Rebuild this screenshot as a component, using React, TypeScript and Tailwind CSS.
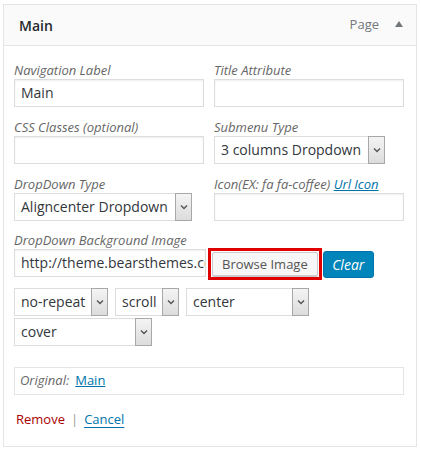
import type { ReactNode } from 'react';

const font = { fontFamily: '"Open Sans", "Liberation Sans", sans-serif' };

function Label({ children }: { children: ReactNode }) {
  return <div className="h-[18px] text-[13px] leading-[18px] italic text-[#666] whitespace-nowrap">{children}</div>;
}

function TextBox({ value = '', className = '' }: { value?: string; className?: string }) {
  return (
    <div className={`h-[28px] border border-[#ddd] bg-white shadow-[inset_0_1px_2px_rgba(0,0,0,0.07)] px-[6px] text-[14px] leading-[26px] text-[#32373c] overflow-hidden whitespace-nowrap ${className}`}>
      {value}
    </div>
  );
}

function Chevron() {
  return (
    <svg width="8" height="6" viewBox="0 0 8 6" fill="none">
      <path d="M1 1.5 L4 4.5 L7 1.5" stroke="#555" strokeWidth="1.4" />
    </svg>
  );
}

function Select({ value, className = '' }: { value: string; className?: string }) {
  return (
    <div className={`h-[28px] flex border-y border-l border-[#ddd] bg-white text-[14px] text-[#32373c] ${className}`}>
      <div className="flex-1 px-[6px] leading-[26px] overflow-hidden whitespace-nowrap">{value}</div>
      <div className="w-[17px] -my-px border border-[#a8a8a8] bg-gradient-to-b from-[#f4f4f4] to-[#dcdcdc] flex items-center justify-center">
        <Chevron />
      </div>
    </div>
  );
}

export default function App() {
  return (
    <div className="min-h-screen bg-white pt-[4px] pl-[3px]" style={font}>
      <div className="w-[414px] h-[443px] border border-[#e5e5e5] bg-white flex flex-col">
        {/* header */}
        <div className="h-[41px] bg-[#fafafa] border-b border-[#e5e5e5] flex items-center pl-[15px] pr-[13px]">
          <span className="text-[14px] font-semibold text-[#23282d]">Main</span>
          <span className="ml-auto text-[13px] text-[#72777c]">Page</span>
          <svg className="ml-[16px] mb-[2px]" width="8" height="6" viewBox="0 0 8 6">
            <path d="M0 6 L4 0 L8 6 Z" fill="#72777c" />
          </svg>
        </div>

        {/* body */}
        <div className="pl-[10px] pr-[12px] pt-[15px]">
          <div className="grid grid-cols-[190px_190px] gap-x-[10px] gap-y-[11px]">
            <div>
              <Label>Navigation Label</Label>
              <TextBox value="Main" />
            </div>
            <div>
              <Label>Title Attribute</Label>
              <TextBox />
            </div>
            <div>
              <Label>CSS Classes (optional)</Label>
              <TextBox />
            </div>
            <div>
              <Label>Submenu Type</Label>
              <Select value="3 columns Dropdown" className="w-[171px]" />
            </div>
            <div>
              <Label>DropDown Type</Label>
              <Select value="Aligncenter Dropdown" className="w-[178px]" />
            </div>
            <div>
              <Label>
                Icon(EX: fa fa-coffee){' '}
                <span className="text-[#0073aa] underline">Url Icon</span>
              </Label>
              <TextBox />
            </div>
          </div>

          <div className="mt-[10px]">
            <Label>DropDown Background Image</Label>
            <div className="flex items-start">
              <TextBox value="http://theme.bearsthemes.com/wp-content" className="w-[192px]" />
              <div className="ml-[2px] -mt-px border-[3px] border-[#e00000] p-px">
                <div className="h-[24px] px-[9px] border border-[#ccc] bg-[#f7f7f7] rounded-[2px] text-[13px] leading-[22px] text-[#555] whitespace-nowrap shadow-[0_1px_0_#ccc]">
                  Browse Image
                </div>
              </div>
              <div className="ml-px mt-[2px] h-[27px] w-[51px] rounded-[3px] bg-[#0085ba] border border-[#0073aa] text-white italic text-[14px] leading-[25px] text-center">
                Clear
              </div>
            </div>
          </div>

          <div className="mt-[8px] flex gap-x-[7px]">
            <Select value="no-repeat" className="w-[94px]" />
            <Select value="scroll" className="w-[64px]" />
            <Select value="center" className="w-[123px]" />
          </div>
          <div className="mt-[2px]">
            <Select value="cover" className="w-[138px]" />
          </div>

          <div className="mt-[21px] h-[28px] w-[390px] border border-[#e5e5e5] flex items-center px-[5px] text-[13px]">
            <span className="italic text-[#666]">Original:</span>
            <span className="ml-[6px] text-[#0073aa] underline">Main</span>
          </div>

          <div className="mt-[15px] flex items-center text-[13px] pl-[2px]">
            <span className="text-[#a00]">Remove</span>
            <span className="mx-[6px] text-[#999]">|</span>
            <span className="text-[#0073aa] underline underline-offset-[3px]">Cancel</span>
          </div>
        </div>
      </div>
    </div>
  );
}
